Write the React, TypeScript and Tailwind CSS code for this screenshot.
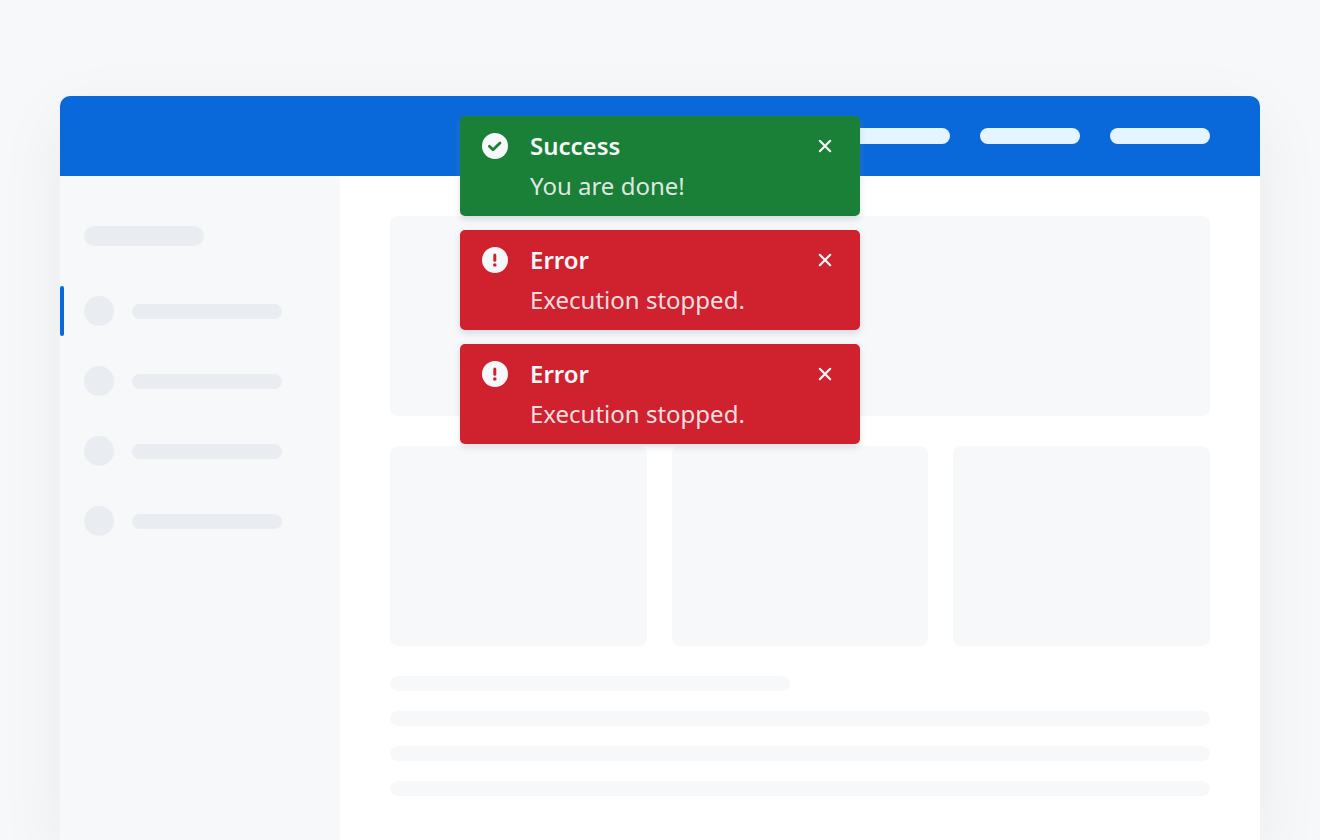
import React, { useState } from 'react'

type ToastData = {
  id: number
  kind: 'success' | 'error'
  title: string
  message: string
}

const initialToasts: ToastData[] = [
  { id: 1, kind: 'success', title: 'Success', message: 'You are done!' },
  { id: 2, kind: 'error', title: 'Error', message: 'Execution stopped.' },
  { id: 3, kind: 'error', title: 'Error', message: 'Execution stopped.' },
]

function CheckIcon() {
  return (
    <svg viewBox="0 0 26 26" className="size-[26px] text-[#1a7f37]" aria-hidden="true">
      <circle cx="13" cy="13" r="13" fill="#f6f8fa" />
      <path d="M7.4 13.3 11 16.7 18 9.9" fill="none" stroke="currentColor" strokeWidth="2.8" strokeLinecap="round" strokeLinejoin="round" />
    </svg>
  )
}

function AlertIcon() {
  return (
    <svg viewBox="0 0 26 26" className="size-[26px] text-[#cf222e]" aria-hidden="true">
      <circle cx="13" cy="13" r="13" fill="#f6f8fa" />
      <path d="M12.8 8v5.2" stroke="currentColor" strokeWidth="3" strokeLinecap="round" />
      <circle cx="12.8" cy="18" r="1.8" fill="currentColor" />
    </svg>
  )
}

function Toast({ toast, onClose }: { toast: ToastData; onClose: () => void }) {
  const color = toast.kind === 'success' ? 'bg-[#1a7f37]' : 'bg-[#cf222e]'
  return (
    <div role="status" className={`${color} flex gap-[22px] rounded-[5px] px-[22px] py-[10px] shadow-[0_3px_6px_rgba(140,149,159,0.3)]`}>
      <div className="flex h-10 items-center">
        {toast.kind === 'success' ? <CheckIcon /> : <AlertIcon />}
      </div>
      <div className="flex-1 text-2xl leading-10">
        <h2 className="font-semibold text-[#f6f8fa]">{toast.title}</h2>
        <p className="font-normal text-[#f6f8fa]/90">{toast.message}</p>
      </div>
      <button type="button" aria-label="Close" onClick={onClose} className="flex h-10 w-[26px] cursor-pointer items-center justify-center">
        <svg viewBox="0 0 14 14" className="size-[14px]" fill="none" stroke="#f6f8fa" strokeWidth="2.2" strokeLinecap="round">
          <path d="M1.8 1.8 12.2 12.2M12.2 1.8 1.8 12.2" />
        </svg>
      </button>
    </div>
  )
}

export default function App() {
  const [toasts, setToasts] = useState(initialToasts)

  return (
    <div className="flex min-h-screen flex-col overflow-hidden bg-[#f6f8fa] px-15 pt-24 font-['Noto_Sans',sans-serif]">
      <div className="relative flex flex-1 flex-col rounded-t-[10px] bg-white shadow-[0_20px_70px_rgba(0,0,0,0.06)]">
        <header className="flex h-20 items-center justify-end gap-[30px] rounded-t-[10px] bg-[#0969da] px-[50px]">
          <div className="h-4 w-[100px] rounded-full bg-[#e4f5ff]"></div>
          <div className="h-4 w-[100px] rounded-full bg-[#e4f5ff]"></div>
          <div className="h-4 w-[100px] rounded-full bg-[#e4f5ff]"></div>
        </header>

        <div className="flex flex-1">
          <aside className="w-[280px] shrink-0 bg-[#f6f8fa] pt-[50px]">
            <div className="ml-6 h-5 w-[120px] rounded-full bg-[#e9edf2]"></div>
            <ul className="mt-10 space-y-5">
              {[0, 1, 2, 3].map((i) => (
                <li key={i} className="flex h-[50px] items-center">
                  <div className={i === 0 ? 'h-full w-1 rounded-[2px] bg-[#0969da]' : 'h-full w-1'}></div>
                  <div className="ml-5 size-[30px] rounded-full bg-[#e9edf2]"></div>
                  <div className="ml-[18px] h-[15px] w-[150px] rounded-full bg-[#e9edf2]"></div>
                </li>
              ))}
            </ul>
          </aside>

          <main className="flex-1 px-[50px] pt-10">
            <div className="h-[200px] rounded-lg bg-[#f6f8fa]"></div>
            <div className="mt-[30px] grid grid-cols-3 gap-[25px]">
              <div className="h-[200px] rounded-lg bg-[#f6f8fa]"></div>
              <div className="h-[200px] rounded-lg bg-[#f6f8fa]"></div>
              <div className="h-[200px] rounded-lg bg-[#f6f8fa]"></div>
            </div>
            <div className="mt-[30px] space-y-5">
              <div className="h-[15px] w-[400px] rounded-full bg-[#f6f8fa]"></div>
              <div className="h-[15px] rounded-full bg-[#f6f8fa]"></div>
              <div className="h-[15px] rounded-full bg-[#f6f8fa]"></div>
              <div className="h-[15px] rounded-full bg-[#f6f8fa]"></div>
            </div>
          </main>
        </div>

        {/* toast stack over the page */}
        <div className="absolute inset-x-0 top-5 mx-auto flex w-[400px] flex-col gap-[14px]">
          {toasts.map((toast) => (
            <Toast key={toast.id} toast={toast} onClose={() => setToasts(toasts.filter((t) => t.id !== toast.id))} />
          ))}
        </div>
      </div>
    </div>
  )
}
